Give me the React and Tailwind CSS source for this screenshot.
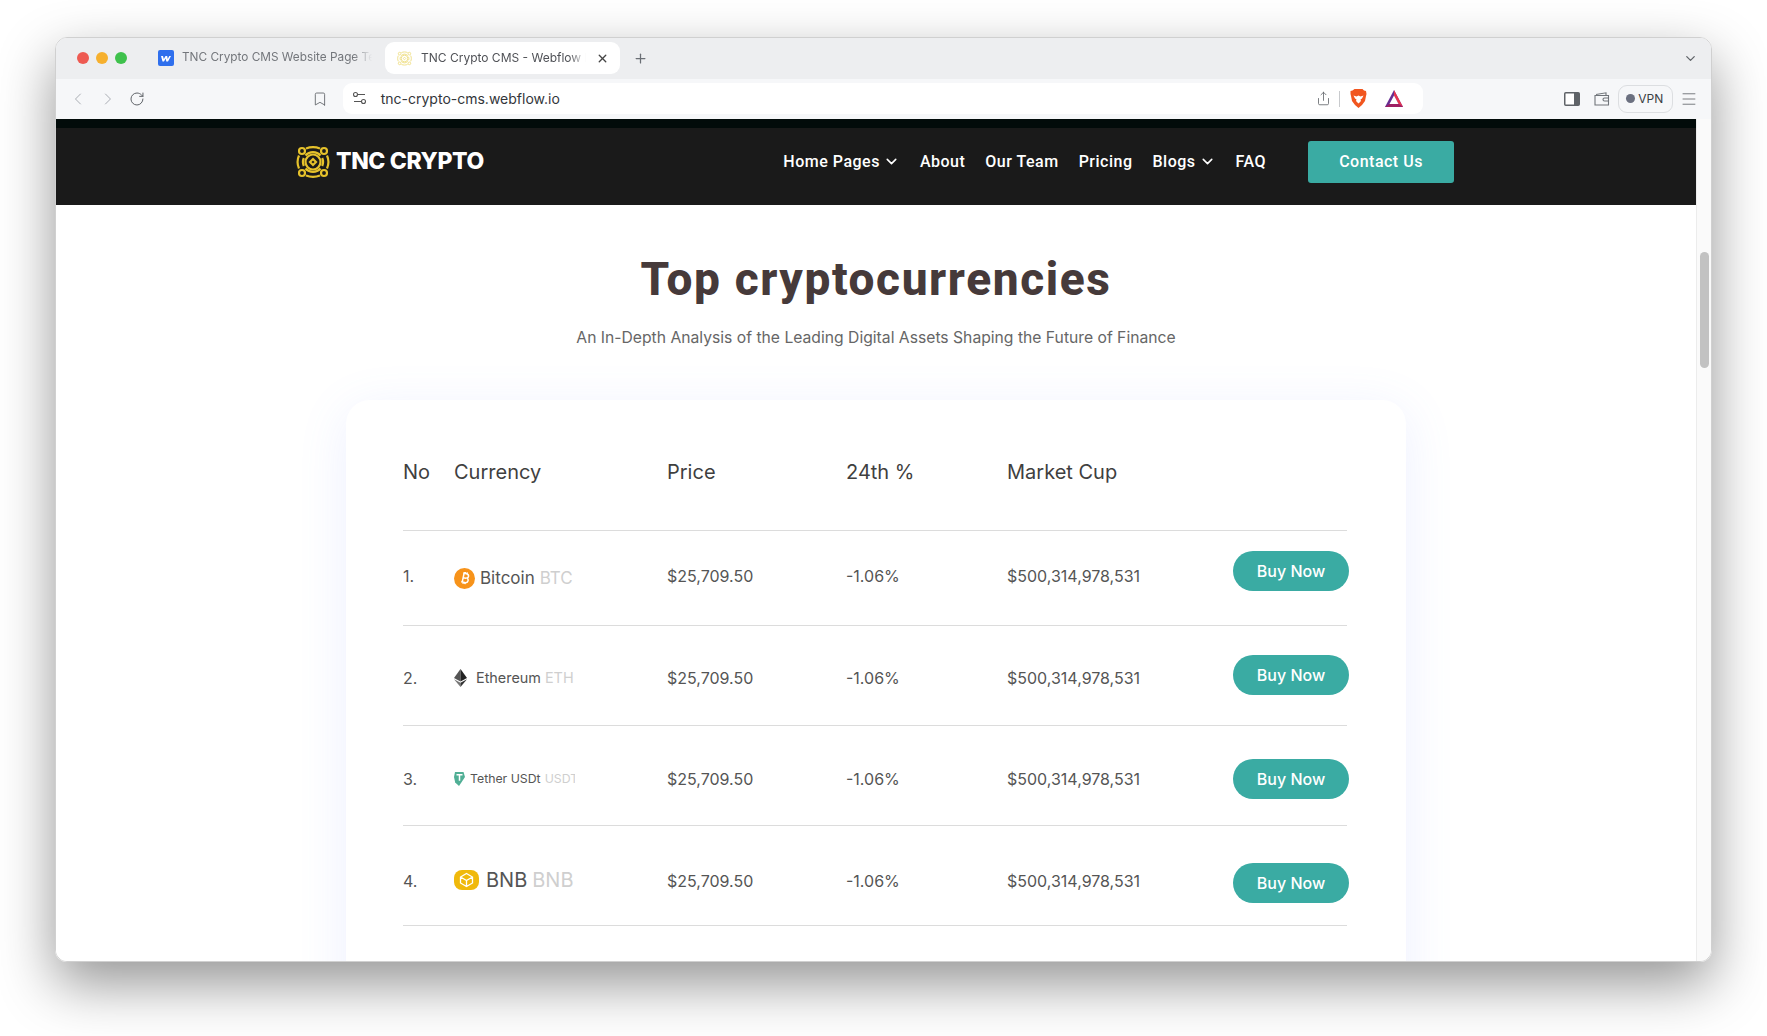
import React from 'react';
import { ChevronDown, ChevronLeft, ChevronRight, RotateCw, Bookmark, X, Plus, Share, Menu } from 'lucide-react';

const ROWS = [
    { no: '1.', pad: 'pt-[33px]', btn: '-mt-[13px]', cur: 'mt-[2px]', h: 'h-[95px]', name: 'Bitcoin', sym: 'BTC', nameCls: 'text-[17px] ml-[5px]', symCls: 'text-[17px] ml-[5px]', icon: 'btc' },
    { no: '2.', pad: 'pt-[40px]', btn: '-mt-[11px]', cur: '', h: 'h-[100px]', name: 'Ethereum', sym: 'ETH', nameCls: 'text-[14.4px] ml-[9px]', symCls: 'text-[14.4px] ml-[4px]', icon: 'eth' },
    { no: '3.', pad: 'pt-[41px]', btn: '-mt-[8px]', cur: '', h: 'h-[100px]', name: 'Tether USDt', sym: 'USDT', nameCls: 'text-[12.3px] ml-[5px]', symCls: 'text-[12.3px] ml-[4px] w-[30px] overflow-hidden', icon: 'usdt' },
    { no: '4.', pad: 'pt-[43px]', btn: '-mt-[6px]', cur: '-mt-[1px]', h: 'h-[101px]', name: 'BNB', sym: 'BNB', nameCls: 'text-[20px] ml-[7px]', symCls: 'text-[20px] ml-[5px]', icon: 'bnb' },
];

const CoinIcon = ({ type }) => {
    if (type === 'btc') {
        return (
            <svg width="21" height="21" viewBox="0 0 21 21" className="shrink-0">
                <circle cx="10.5" cy="10.5" r="10.5" fill="#f7931a" />
                <g transform="rotate(12 10.5 10.5)">
                    <path d="M8 5.500h3.400c1.600 0 2.600.9 2.600 2.200 0 .9-.5 1.600-1.200 1.900 1 .3 1.700 1 1.700 2.200 0 1.600-1.200 2.600-3 2.600H8M9 5.500v9M9 10h3M10 4v1.500M12 4v1.500M10 14.500v1.500M12 14.500v1.500" fill="none" stroke="#fff" strokeWidth="1.500" />
                </g>
            </svg>
        );
    }
    if (type === 'eth') {
        return (
            <svg width="13" height="18" viewBox="0 0 13 18" className="shrink-0">
                <path d="M6.500 0L0 9l6.500 3.500z" fill="#555" />
                <path d="M6.500 0L13 9l-6.500 3.500z" fill="#222" />
                <path d="M0 10.300L6.500 18v-4.200z" fill="#777" />
                <path d="M13 10.300L6.500 18v-4.200z" fill="#333" />
            </svg>
        );
    }
    if (type === 'usdt') {
        return (
            <svg width="11" height="14" viewBox="0 0 11 14" className="shrink-0">
                <path d="M1 0h8.500L11 5 5 14 1.200 10.500 0 5z" fill="#50af95" />
                <path d="M2.500 2.800h6M5.500 2.800v6" stroke="#fff" strokeWidth="1.500" />
            </svg>
        );
    }
    return (
        <svg width="25" height="20" viewBox="0 0 25 20" className="shrink-0">
            <rect width="25" height="20" rx="8" fill="#f0b90b" />
            <path d="M12.500 3.500l6 3.500v6l-6 3.500-6-3.500V7zM6.500 7l6 3.500 6-3.500M12.500 10.500v6" fill="none" stroke="#fff" strokeWidth="1.300" />
        </svg>
    );
};

const TncLogo = ({ size = 34, color = '#e5c12b' }) => (
    <svg width={size} height={size} viewBox="0 0 34 34" fill="none" stroke={color} strokeWidth="2.200" className="shrink-0">
        <circle cx="6" cy="6" r="3" />
        <circle cx="28" cy="6" r="3" />
        <circle cx="6" cy="28" r="3" />
        <circle cx="28" cy="28" r="3" />
        <path d="M10 3.500c4.500-1.800 9.500-1.800 14 0M10 30.500c4.500 1.800 9.500 1.800 14 0M3 10.500c-2 4.500-2 8.500 0 13M31 10.500c2 4.500 2 8.500 0 13" />
        <path d="M9.500 10.500a10 10 0 0115 0M9.500 23.500a10 10 0 0015 0M7.800 13a10 10 0 000 8M26.200 13a10 10 0 010 8" />
        <circle cx="17" cy="17" r="7.500" />
        <path d="M17 14l3 3-3 3-3-3z" />
    </svg>
);

const WebflowIcon = () => (
    <svg width="16" height="16" viewBox="0 0 16 16" className="shrink-0">
        <rect width="16" height="16" rx="2" fill="#2f6fed" />
        <path d="M3 6h2l.8 3L7.500 6h1.700l.5 3 1.600-3H13l-3 5.500H8.300L7.700 8.500l-1.700 3H4.500z" fill="#fff" />
    </svg>
);

const BraveIcon = () => (
    <svg width="17" height="19" viewBox="0 0 17 19" className="shrink-0">
        <path d="M4.500 0h8l1.500 1.500 2 .5.500 3-.5 2-1 5-3 4-3.500 3-3.500-3-3-4-1-5-.5-2L.500 2l2-.5z" fill="#f1561f" />
        <path d="M3.500 6.500l3 1 2-1 2 1 3-1-1.500 3-1.500 1 .5 1.500-2.500 2.500L6 12l.5-1.500-1.500-1z" fill="#fff" />
    </svg>
);

const BatIcon = () => (
    <svg width="18" height="17" viewBox="0 0 18 17" className="shrink-0">
        <path d="M9 0L0 17h18z" fill="#662d91" />
        <path d="M9 0l9 17-4.500-3L9 5.500z" fill="#e8344e" />
        <path d="M9 5.500L13.500 14h-9z" fill="#fff" />
        <path d="M0 17l4.500-3h9l4.500 3z" fill="#9e1f63" />
    </svg>
);

const TuneIcon = () => (
    <svg width="15" height="15" viewBox="0 0 15 15" fill="none" stroke="#555" strokeWidth="1.100" className="shrink-0">
        <circle cx="3.500" cy="3.500" r="2" />
        <path d="M5.500 3.500H13M2 10.500h7.500" />
        <circle cx="11.500" cy="10.500" r="2" />
    </svg>
);

const SidebarIcon = () => (
    <svg width="16" height="14" viewBox="0 0 16 14" className="shrink-0">
        <rect x="0.750" y="0.750" width="14.500" height="12.500" rx="1" fill="#fff" stroke="#5f6368" strokeWidth="1.500" />
        <rect x="10" y="1" width="5" height="12" fill="#5f6368" />
    </svg>
);

const WalletIcon = () => (
    <svg width="16" height="14" viewBox="0 0 16 14" fill="none" stroke="#70757a" strokeWidth="1.100" className="shrink-0">
        <path d="M2 2.500L12 .800V3M1 3.500h13.500v9.500H1z" />
        <path d="M15 6h-4.500a1.500 1.500 0 000 3H15" />
    </svg>
);

const ChromeTabs = () => (
    <div className="h-[41px] bg-[#edeef0] flex items-start pt-[4px] pl-[21px] pr-[13px] shrink-0">
        <div className="flex items-center gap-[7px] h-[32px] w-[68px] shrink-0">
            <span className="w-[12px] h-[12px] rounded-full bg-[#ee5a52]" />
            <span className="w-[12px] h-[12px] rounded-full bg-[#f6b02e]" />
            <span className="w-[12px] h-[12px] rounded-full bg-[#3fc14c]" />
        </div>
        <div className="flex items-center gap-2 h-[32px] ml-[13px] w-[214px] shrink-0">
            <WebflowIcon />
            <span className="text-[11.8px] text-[#73767b] whitespace-nowrap overflow-hidden w-[190px] [mask-image:linear-gradient(to_right,black_90%,transparent)]">TNC Crypto CMS Website Page Template</span>
        </div>
        <div className="flex items-center h-[32px] w-[235px] ml-[13px] bg-white rounded-[9px] pl-[12px] shrink-0">
            <TncLogo size={15} color="#efe08a" />
            <span className="text-[12px] text-[#505257] whitespace-nowrap overflow-hidden w-[165px] ml-[9px] [mask-image:linear-gradient(to_right,black_90%,transparent)]">TNC Crypto CMS - Webflow HTML Website</span>
            <X size={13} strokeWidth={2.5} className="text-[#444] ml-[10px]" />
        </div>
        <Plus size={15} className="text-[#6b6f75] ml-[13px] mt-[9px]" />
        <ChevronDown size={15} strokeWidth={2} className="text-[#5f6368] ml-auto mt-[9px]" />
    </div>
);

const ChromeToolbar = () => (
    <div className="h-[40px] bg-[#f6f7f9] flex items-center pl-[12px] pr-[13px] pb-[1px] shrink-0">
        <ChevronLeft size={20} strokeWidth={1.2} className="text-[#a9adb3]" />
        <ChevronRight size={20} strokeWidth={1.2} className="text-[#a9adb3] ml-[10px]" />
        <RotateCw size={16} strokeWidth={1.500} className="text-[#5f6368] ml-[11px]" />
        <Bookmark size={16} strokeWidth={1.300} className="text-[#5f6368] ml-[167px]" />
        <div className="flex items-center h-[31px] w-[1085px] ml-[15px] bg-white rounded-[9px] pl-[9px] pr-[20px]">
            <TuneIcon />
            <span className="text-[14px] text-[#33363a] ml-[14px]">tnc-crypto-cms.webflow.io</span>
            <Share size={15} strokeWidth={1.300} className="text-[#5f6368] ml-auto" />
            <span className="w-px h-[16px] bg-[#c8cacd] ml-[8px]" />
            <span className="ml-[10px]"><BraveIcon /></span>
            <span className="ml-[18px]"><BatIcon /></span>
        </div>
        <span className="ml-[141px]"><SidebarIcon /></span>
        <span className="ml-[14px]"><WalletIcon /></span>
        <div className="flex items-center gap-[3px] h-[28px] w-[55px] ml-[8px] pl-[7px] border border-[#dcdee1] rounded-[9px]">
            <span className="w-[9px] h-[9px] rounded-full bg-[#6b7080]" />
            <span className="text-[12px] text-[#3c3f44]">VPN</span>
        </div>
        <Menu size={18} strokeWidth={1.100} className="text-[#5f6368] ml-[7px]" />
    </div>
);

const NavBar = () => (
    <div>
        <div className="h-[9px] bg-[#020b0a]" />
        <div className="h-[77px] bg-[#1a1a1a] flex items-center pb-[10px] pl-[240px] pr-[242px] [font-family:Roboto,sans-serif]">
            <TncLogo />
            <span className="text-[23px] font-extrabold text-white ml-[6px] tracking-[-0.4px] [font-family:Inter,sans-serif]">TNC CRYPTO</span>
            <nav className="flex items-center gap-5 ml-auto text-white text-[16px] font-medium tracking-[0.5px]">
                <a className="flex items-center gap-[3px]">Home Pages <ChevronDown size={17} strokeWidth={2.200} /></a>
                <a>About</a>
                <a>Our Team</a>
                <a>Pricing</a>
                <a className="flex items-center gap-[3px]">Blogs <ChevronDown size={17} strokeWidth={2.200} /></a>
                <a>FAQ</a>
            </nav>
            <button className="w-[146px] h-[42px] ml-[42px] bg-[#3aaba3] rounded-[3px] text-white text-[16px] font-medium tracking-[0.5px]">Contact Us</button>
        </div>
    </div>
);

const CoinTable = () => (
    <div className="w-[1060px] h-[700px] mx-auto mt-[50px] bg-white rounded-[24px] pt-[58px] pl-[57px] pr-[59px] shadow-[0_10px_50px_rgba(110,130,255,0.12)] [font-family:Inter,sans-serif]">
        <div className="grid grid-cols-[51px_213px_179px_161px_1fr] h-[72px] text-[20px] leading-[28px] text-[#3f3f3f]">
            <div>No</div>
            <div>Currency</div>
            <div>Price</div>
            <div>24th %</div>
            <div>Market Cup</div>
        </div>
        {ROWS.map((row) => (
            <div key={row.no} className={`grid grid-cols-[51px_213px_179px_161px_1fr] border-t border-[#dcdcdc] text-[16px] leading-[24px] text-[#555] last:border-b ${row.h} ${row.pad}`}>
                <div>{row.no}</div>
                <div className={`flex items-center h-[24px] ${row.cur}`}>
                    <CoinIcon type={row.icon} />
                    <span className={row.nameCls}>{row.name}</span>
                    <span className={`text-[#cfcfcf] whitespace-nowrap ${row.symCls}`}>{row.sym}</span>
                </div>
                <div>$25,709.50</div>
                <div>-1.06%</div>
                <div className="flex justify-between">
                    <span>$500,314,978,531</span>
                    <button className={`w-[116px] h-[40px] -mr-[2px] bg-[#3aaba3] rounded-full text-white text-[16px] font-medium ${row.btn}`}>Buy Now</button>
                </div>
            </div>
        ))}
    </div>
);

const App = () => {
    return (
        <div className="w-[1767px] h-[1036px] bg-white pl-[55px] pt-[37px] overflow-hidden [font-family:Inter,sans-serif]">
            <div className="w-[1657px] h-[925px] flex flex-col rounded-[12px] overflow-hidden border border-[#d0d0d0] shadow-[0_22px_55px_rgba(0,0,0,0.42)]">
                <ChromeTabs />
                <ChromeToolbar />
                <div className="flex flex-1 min-h-0">
                    <div className="flex-1 min-w-0 overflow-hidden bg-white">
                        <NavBar />
                        <h1 className="mt-[45px] text-center text-[46px] leading-[58px] font-extrabold text-[#463a3a] tracking-[1.6px] [font-family:Roboto,sans-serif]">Top cryptocurrencies</h1>
                        <p className="mt-[18px] text-center text-[15.7px] leading-[24px] text-[#666]">An In-Depth Analysis of the Leading Digital Assets Shaping the Future of Finance</p>
                        <CoinTable />
                    </div>
                    <div className="w-[15px] shrink-0 bg-[#fafafa] border-l border-[#ececec] pt-[133px] pl-[3px]">
                        <div className="w-[9px] h-[116px] rounded-full bg-[#c2c2c2]" />
                    </div>
                </div>
            </div>
        </div>
    );
};

export default App;
